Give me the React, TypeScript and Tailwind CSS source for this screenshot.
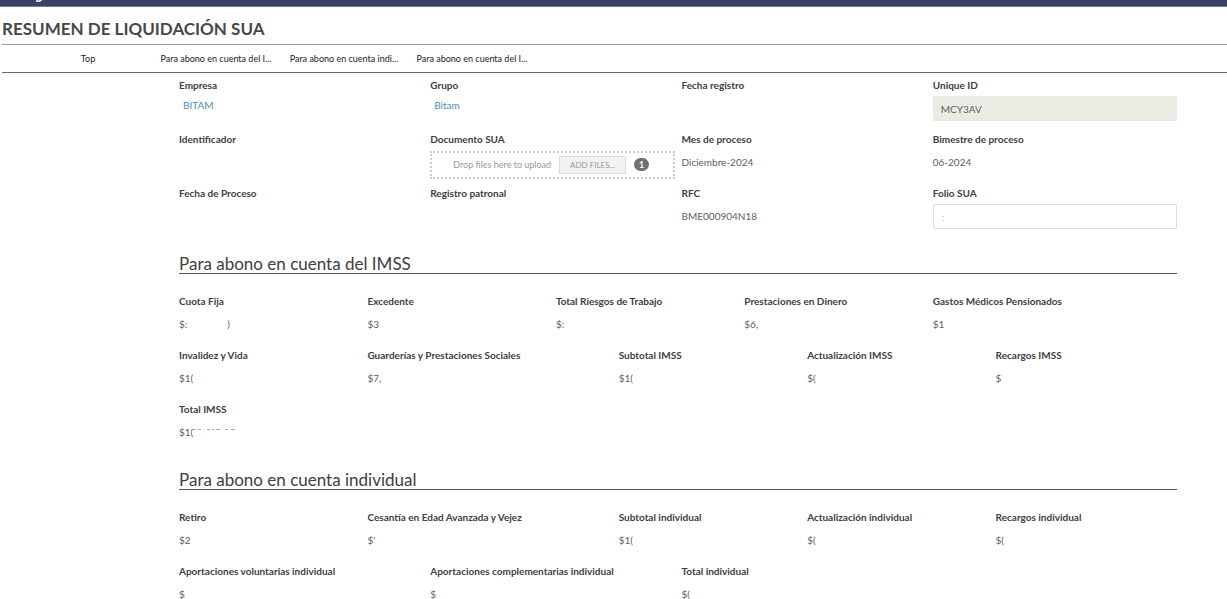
import React, { useState } from "react";
import clsx from "clsx";

interface Amount {
  label: string;
  value: string;
  span: string;
}

const tabs = [
  "Top",
  "Para abono en cuenta del I...",
  "Para abono en cuenta indi...",
  "Para abono en cuenta del I...",
];

const imss: Amount[] = [
  { label: "Cuota Fija", value: "$:", span: "col-span-3" },
  { label: "Excedente", value: "$3", span: "col-span-3" },
  { label: "Total Riesgos de Trabajo", value: "$:", span: "col-span-3" },
  { label: "Prestaciones en Dinero", value: "$6,", span: "col-span-3" },
  { label: "Gastos Médicos Pensionados", value: "$1", span: "col-span-4" },
  { label: "Invalidez y Vida", value: "$1(", span: "col-span-3" },
  { label: "Guarderías y Prestaciones Sociales", value: "$7,", span: "col-span-4" },
  { label: "Subtotal IMSS", value: "$1(", span: "col-span-3" },
  { label: "Actualización IMSS", value: "$(", span: "col-span-3" },
  { label: "Recargos IMSS", value: "$", span: "col-span-3" },
  { label: "Total IMSS", value: "$1(", span: "col-span-3" },
];

const individual: Amount[] = [
  { label: "Retiro", value: "$2", span: "col-span-3" },
  { label: "Cesantía en Edad Avanzada y Vejez", value: "$'", span: "col-span-4" },
  { label: "Subtotal individual", value: "$1(", span: "col-span-3" },
  { label: "Actualización individual", value: "$(", span: "col-span-3" },
  { label: "Recargos individual", value: "$(", span: "col-span-3" },
  { label: "Aportaciones voluntarias individual", value: "$", span: "col-span-4" },
  { label: "Aportaciones complementarias individual", value: "$", span: "col-span-4" },
  { label: "Total individual", value: "$(", span: "col-span-4" },
];

function Field({
  label,
  span = "col-span-4",
  htmlFor,
  children,
}: {
  label: string;
  span?: string;
  htmlFor?: string;
  children?: React.ReactNode;
}) {
  const labelClass = "block h-[14px] leading-[14px] font-bold text-[#404040] whitespace-nowrap";
  return (
    <div className={clsx("h-[54px] pr-[7px]", span)}>
      {htmlFor ? (
        <label htmlFor={htmlFor} className={labelClass}>{label}</label>
      ) : (
        <span className={labelClass}>{label}</span>
      )}
      <div className="mt-1 flex h-[25px] items-center">{children}</div>
    </div>
  );
}

function AmountField({ item }: { item: Amount }) {
  return (
    <Field label={item.label} span={item.span}>
      <span>{item.value}</span>
      {item.label === "Cuota Fija" && (
        <span className="ml-10">)</span>
      )}
      {item.label === "Total IMSS" && (
        <svg width="44" height="8" viewBox="0 0 44 8" className="mt-2 self-start" fill="none" stroke="#aaa" aria-hidden="true">
          <path d="M0 1.5h3M5 1.5h3M14 1.5h3M19 1.5h2M23 1.5h4M32 1.5h3M38 1.5h4" />
        </svg>
      )}
    </Field>
  );
}

function Section({ title, items }: { title: string; items: Amount[] }) {
  return (
    <section>
      <div className="mb-5 pr-[7px]">
        <h2 className="flex h-[34px] items-end border-b border-[#555] text-[17px] leading-[18px] text-[#404040]">{title}</h2>
      </div>
      <div className="grid grid-cols-16">
        {items.map((item) => (
          <AmountField key={item.label} item={item} />
        ))}
      </div>
    </section>
  );
}

export default function App() {
  const [folio, setFolio] = useState(":");

  return (
    <div className="min-h-screen overflow-hidden bg-white font-['Lato',sans-serif] text-[10px] text-[#606060]">
      {/* Barra superior */}
      <header className="h-[7px] border-b border-[#777b95] bg-[#3a4068] pl-9">
        <svg width="7" height="3" viewBox="0 0 7 3" fill="none" stroke="#fff" strokeWidth="1.5" aria-hidden="true">
          <path d="M0 .8Q3.5 2 5.5 0" />
        </svg>
      </header>

      <div className="pl-0.5">
        <h1 className="flex h-[37px] items-center pt-1.5 text-[17px] font-bold text-[#484848]">
          RESUMEN DE LIQUIDACIÓN SUA
        </h1>
        <nav className="flex h-[29px] items-center border-y border-t-[#999] border-b-[#666] pl-[22px]">
          {tabs.map((tab, i) => (
            <a key={i} href="#" className="w-32 text-center text-[9px] text-[#222]">
              {tab}
            </a>
          ))}
        </nav>
      </div>

      <main className="pt-[5px] pr-[43px] pl-[179px]">
        <div className="grid grid-cols-16">
          <Field label="Empresa">
            <a href="#" className="mb-1.5 ml-1 text-[#4e8db5]">BITAM</a>
          </Field>
          <Field label="Grupo">
            <a href="#" className="mb-1.5 ml-1 text-[#4e8db5]">Bitam</a>
          </Field>
          <Field label="Fecha registro" />
          <Field label="Unique ID" htmlFor="unique-id">
            <input id="unique-id" readOnly value="MCY3AV" className="h-full w-full bg-[#ebebe4] px-2 outline-none" />
          </Field>

          <Field label="Identificador" />
          <Field label="Documento SUA">
            <div className="mt-1 flex h-7 w-full shrink-0 items-center border-2 border-dotted border-[#ccc] pl-[21px] text-[#999]">
              <span className="text-[9px] whitespace-nowrap">Drop files here to upload</span>
              <button type="button" className="ml-2 h-[18px] w-[67px] border border-[#ddd] bg-[#f2f2f2] text-[8px] text-[#999]">
                ADD FILES...
              </button>
              <span className="ml-2 flex h-[13px] w-[15px] items-center justify-center rounded-full bg-[#707070] text-[9px] font-bold text-white">
                1
              </span>
            </div>
          </Field>
          <Field label="Mes de proceso">Diciembre-2024</Field>
          <Field label="Bimestre de proceso">06-2024</Field>

          <Field label="Fecha de Proceso" />
          <Field label="Registro patronal" />
          <Field label="RFC">BME000904N18</Field>
          <Field label="Folio SUA" htmlFor="folio">
            <input
              id="folio"
              value={folio}
              onChange={(e) => setFolio(e.target.value)}
              className="h-full w-full rounded-xs border border-[#ddd] px-2 text-[#bbb] outline-none"
            />
          </Field>
        </div>

        <Section title="Para abono en cuenta del IMSS" items={imss} />
        <Section title="Para abono en cuenta individual" items={individual} />
      </main>
    </div>
  );
}
